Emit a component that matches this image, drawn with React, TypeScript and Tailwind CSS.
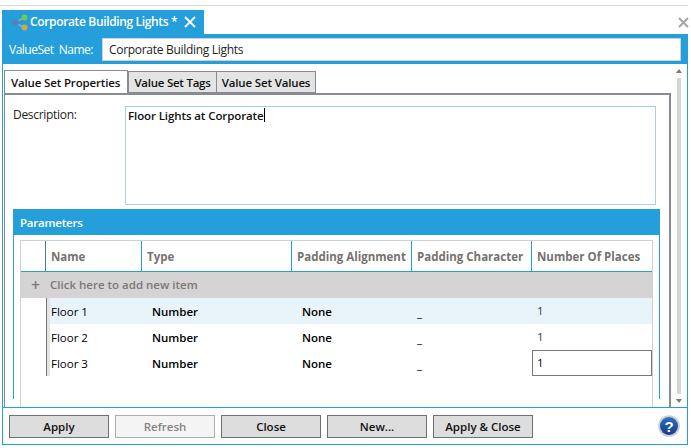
const font = "font-['Open_Sans','Noto_Sans',sans-serif]";

function ActionButton({ label, disabled }: { label: string; disabled?: boolean }) {
  return (
    <button
      className={
        disabled
          ? "w-[100px] h-[23px] pt-[1px] border border-[#adadad] bg-[#f4f4f4] text-[#838383] text-[11.5px] font-semibold leading-none"
          : "w-[100px] h-[23px] pt-[1px] border border-[#707070] bg-[#dddddd] text-[#111] text-[11.5px] font-semibold leading-none"
      }
    >
      {label}
    </button>
  );
}

function HeaderCell({ label, className }: { label: string; className: string }) {
  return (
    <div className={`${className} h-full flex items-center pl-[5px] pt-[1px] border-r border-r-[#259fdb] text-[11.5px] font-bold text-[#77716f] whitespace-nowrap`}>
      {label}
    </div>
  );
}

function Row({ name, selected, shaded }: { name: string; selected?: boolean; shaded?: boolean }) {
  return (
    <div className={shaded ? "flex h-[26px] bg-[#e8f3fa] text-[11.5px] text-black" : "flex h-[26px] bg-white text-[11.5px] text-black"}>
      <div className="w-[25px] bg-white" />
      <div className="w-[96px] h-full flex items-center border-l border-l-[#777] pl-[4px] pt-[1px] relative">
        <span className="absolute left-0 top-0 bottom-0 w-[3px] bg-[#e3e3e3]" />
        <span className="relative">{name}</span>
      </div>
      <div className="w-[150px] pl-[10px] pt-[1px] flex items-center font-semibold">Number</div>
      <div className="w-[120px] pl-[10px] pt-[1px] flex items-center font-semibold">None</div>
      <div className="w-[120px] pl-[5px] flex items-center pt-[3px]">_</div>
      {selected ? (
        <div className="w-[120px] h-full border border-[#777] bg-white pl-[4px] flex items-center">1</div>
      ) : (
        <div className="w-[120px] pl-[5px] flex items-center text-[#3a3a3a]">1</div>
      )}
    </div>
  );
}

export default function App() {
  return (
    <div className={`w-[691px] h-[448px] bg-white overflow-hidden ${font}`}>
      <div className="h-[10px] w-[688px] pt-[5px]">
        <div className="h-[1px] bg-[#d6d6d6]" />
      </div>

      {/* title strip */}
      <div className="ml-[2px] w-[686px] h-[24px] flex items-center justify-between">
        <div className="w-[202px] h-full bg-[#259fdb] flex items-center pl-[9px] gap-[2px] text-white text-[12px] font-semibold tracking-[-0.35px] whitespace-nowrap">
          <svg width="17" height="17" viewBox="0 0 17 17">
            <path d="M4 8.5 L13 3.5 M4 8.5 L13 13.5" stroke="#9fb4c4" strokeWidth="1.2" />
            <ellipse cx="4.5" cy="8.5" rx="3.8" ry="3" fill="#5383b8" />
            <circle cx="13.5" cy="3.5" r="3" fill="#6fc850" />
            <circle cx="13.5" cy="13.5" r="3" fill="#d3a540" />
          </svg>
          <span>Corporate Building Lights *</span>
          <svg width="12" height="12" viewBox="0 0 12 12" className="ml-[5px]">
            <path d="M1 1 L11 11 M11 1 L1 11" stroke="white" strokeWidth="1.8" />
          </svg>
        </div>
        <svg width="11" height="11" viewBox="0 0 11 11" className="mr-[-1px]">
          <path d="M1 1 L10 10 M10 1 L1 10" stroke="#a6a6a6" strokeWidth="2" />
        </svg>
      </div>

      {/* body frame */}
      <div className="ml-[2px] w-[686px] h-[411px] border-x border-b border-[#259fdb] flex flex-col">
        <div className="h-[30px] bg-[#259fdb] flex items-center pl-[6px] pr-[6px] text-white text-[12px]">
          <span className="w-[93px] pt-[1px] whitespace-pre tracking-[-0.5px]">ValueSet  Name:</span>
          <div className="flex-1 h-[23px] bg-white border border-[#d0d0d0] flex items-center pl-[6px] pt-[1px] text-[#222] text-[12px] tracking-[-0.3px]">
            Corporate Building Lights
          </div>
        </div>

        <div className="flex-1 flex min-h-0">
          <div className="w-[668px] pt-[6px] pl-[1px] h-[343px] overflow-hidden">
            <div className="flex h-[23px] items-end">
              <div className="w-[124px] h-[23px] pt-[1px] border-t border-r border-l border-[#8a8a92] bg-white flex items-center pl-[6px] text-[11.5px] font-semibold tracking-[-0.15px] text-[#111] whitespace-nowrap">
                Value Set Properties
              </div>
              <div className="w-[89px] h-[22px] pt-[1px] border border-[#8a8a92] bg-[#e4e4e4] flex items-center justify-center text-[11.5px] font-semibold tracking-[-0.25px] text-[#111] whitespace-nowrap">
                Value Set Tags
              </div>
              <div className="w-[99px] h-[22px] pt-[1px] border border-[#8a8a92] border-l-0 bg-[#e4e4e4] flex items-center justify-center text-[11.5px] font-semibold tracking-[-0.15px] text-[#111] whitespace-nowrap">
                Value Set Values
              </div>
            </div>
            <div className="border-t-2 border-r-2 border-l border-[#8a8a92] h-[320px] pl-[8px] pr-[8px] pt-[11px]">
              <div className="flex">
                <div className="w-[112px] text-[12px] tracking-[-0.3px] text-[#222]">Description:</div>
                <div className="w-[531px] h-[99px] border border-[#a9cfe8] pl-[2px] text-[11.5px] font-semibold tracking-[-0.1px] text-[#111] flex items-start">
                  <span>Floor Lights at Corporate</span>
                  <span className="w-[1px] h-[14px] bg-black mt-[1px]" />
                </div>
              </div>
              <div className="mt-[4px] w-[647px] h-[190px] border-x border-[#259fdb]">
                <div className="h-[26px] bg-[#259fdb] -mx-[1px] flex items-center pl-[7px] pt-[2px] text-[11.5px] font-semibold tracking-[-0.2px] text-white">Parameters</div>
                <div className="mt-[5px] ml-[6px] w-[633px] border-x border-t border-[#d0d0d0] h-[200px]">
                  <div className="flex h-[31px] items-stretch border-b border-[#259fdb]">
                    <div className="w-[25px] border-r border-r-[#3f7ea6]" />
                    <HeaderCell label="Name" className="w-[96px]" />
                    <HeaderCell label="Type" className="w-[150px]" />
                    <HeaderCell label="Padding Alignment" className="w-[120px]" />
                    <HeaderCell label="Padding Character" className="w-[120px]" />
                    <div className="flex-1 flex items-center pl-[5px] pt-[1px] text-[11.5px] font-bold text-[#77716f] whitespace-nowrap">Number Of Places</div>
                  </div>
                  <div className="h-[26px] bg-[#d5d3d3] flex items-center text-[#7d7878] text-[11.5px] font-semibold">
                    <span className="w-[29px] text-center text-[16px] leading-none">+</span>
                    <span>Click here to add new item</span>
                  </div>
                  <Row name="Floor 1" shaded />
                  <Row name="Floor 2" />
                  <Row name="Floor 3" selected />
                </div>
              </div>
            </div>
          </div>

          {/* scrollbar */}
          <div className="w-[15px] h-[343px] flex flex-col items-center pt-[5px] pb-[4px]">
            <svg width="6" height="4" viewBox="0 0 6 4"><path d="M3 0 L6 4 L0 4 Z" fill="#7a7a7a" /></svg>
            <div className="w-[4px] flex-1 bg-[#d5d3d3] mt-[5px] mb-[5px]" />
            <svg width="6" height="4" viewBox="0 0 6 4"><path d="M3 4 L6 0 L0 0 Z" fill="#7a7a7a" /></svg>
          </div>
        </div>

        {/* footer */}
        <div className="h-[37px] border-t border-[#259fdb] flex items-center pl-[6px] gap-[6px]">
          <ActionButton label="Apply" />
          <ActionButton label="Refresh" disabled />
          <ActionButton label="Close" />
          <ActionButton label="New..." />
          <ActionButton label="Apply & Close" />
          <svg width="22" height="22" viewBox="0 0 22 22" className="ml-[119px]">
            <defs>
              <linearGradient id="help" x1="0" y1="0" x2="0" y2="1">
                <stop offset="0" stopColor="#2f6fc0" />
                <stop offset="1" stopColor="#123f8c" />
              </linearGradient>
            </defs>
            <circle cx="11" cy="11" r="10.8" fill="#c9ccd2" />
            <circle cx="11" cy="11" r="9" fill="url(#help)" />
            <text x="11" y="16.5" textAnchor="middle" fontSize="15" fontWeight="700" fill="white" fontFamily="Liberation Sans, sans-serif">?</text>
          </svg>
        </div>
      </div>
    </div>
  );
}
